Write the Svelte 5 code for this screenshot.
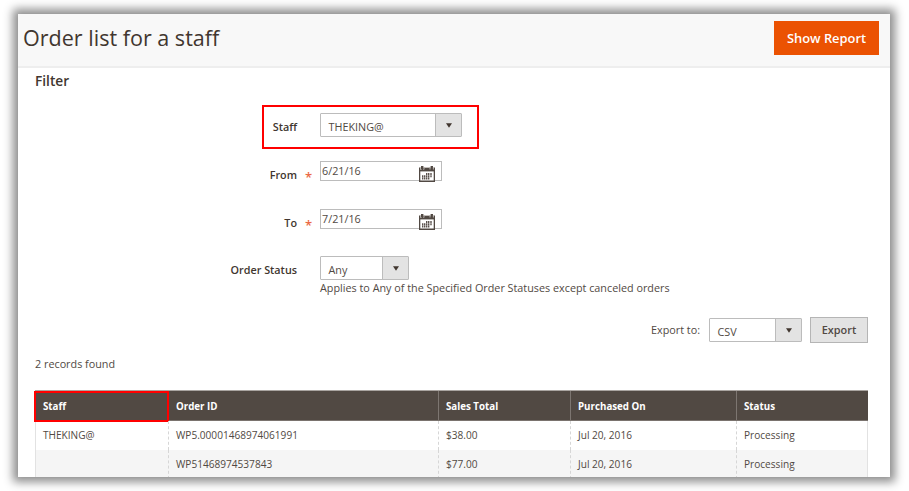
<script>
  const rows = [
    ['THEKING@', 'WP5.00001468974061991', '$38.00', 'Jul 20, 2016', 'Processing'],
    ['', 'WP51468974537843', '$77.00', 'Jul 20, 2016', 'Processing']
  ];
  const heads = ['Staff', 'Order ID', 'Sales Total', 'Purchased On', 'Status'];
</script>

{#snippet select(value, kind)}
  <div class="select {kind}">
    <span class="value">{value}</span>
    <span class="toggle"><svg width="6" height="5" viewBox="0 0 6 5"><path d="M0 .3h6L3 4.7z" fill="#41362f" /></svg></span>
  </div>
{/snippet}

{#snippet dateInput(value)}
  <div class="date">
    <span>{value}</span>
    <svg class="cal" width="16" height="16" viewBox="0 0 16 16">
      <path d="M0 1.5h16V16H0z" fill="#514943" />
      <path d="M1.3 5.4h13.4v9.1H1.3z" fill="#fff" />
      <path d="M2 0h2.4v3H2zM11.6 0H14v3h-2.4z" fill="#514943" />
      <path d="M1.5 1v2.5h1M5 1v2.5h-.5M11 1v2.5M14.4 1v2.5" fill="none" stroke="#d2cecb" stroke-width=".8" />
      <path d="M5.8 1h4.4v1H5.8z" fill="#c5c0bc" />
      <path d="M9 7h1.4v2H9zM11.3 7h1.4v2h-1.4zM7 7h1.4v2H7zM5 9.2h1.4v2H5zM7 9.2h1.4v2H7zM9 9.2h1.4v2H9zM11.3 9.2h1.4v2h-1.4zM3 9.2h1.4v2H3zM3 11.4h1.4v2H3zM5 11.4h1.4v2H5zM7 11.4h1.4v2H7zM9 11.4h1.4v2H9z" fill="#5a524d" />
    </svg>
  </div>
{/snippet}

<div class="page">
  <main class="window">
    <header>
      <h1>Order list for a staff</h1>
      <button class="primary">Show Report</button>
    </header>
    <section class="content">
      <h2>Filter</h2>
      <div class="form">
        <div class="field staff-field">
          <span class="label">Staff</span>
          {@render select('THEKING@', 'staff')}
        </div>
        <div class="field date-field">
          <span class="label">From</span><span class="star">*</span>
          {@render dateInput('6/21/16')}
        </div>
        <div class="field date-field">
          <span class="label">To</span><span class="star">*</span>
          {@render dateInput('7/21/16')}
        </div>
        <div class="field status-field">
          <span class="label">Order Status</span>
          <div>
            {@render select('Any', 'any')}
            <p class="note">Applies to Any of the Specified Order Statuses except canceled orders</p>
          </div>
        </div>
      </div>
      <div class="export">
        <span class="to">Export to:</span>
        {@render select('CSV', 'csv')}
        <button class="secondary">Export</button>
      </div>
      <p class="records">2 records found</p>
      <div class="grid">
        <div class="row head">
          {#each heads as head, i}
            <div class="cell" class:marked={i === 0}><span>{head}</span></div>
          {/each}
        </div>
        {#each rows as row}
          <div class="row">
            {#each row as cell}
              <div class="cell"><span>{cell}</span></div>
            {/each}
          </div>
        {/each}
      </div>
    </section>
  </main>
</div>

<style>
  :global(body) { background: #fff; }
  .page {
    box-sizing: border-box;
    width: 909px;
    height: 491px;
    padding: 14px 19px 14px 18px;
    overflow: hidden;
    font: 10.8px/16px 'Open Sans', 'Noto Sans', sans-serif;
    color: #514943;
  }
  .page * { box-sizing: border-box; }
  h1, h2, p { margin: 0; white-space: nowrap; }
  .window {
    height: 463px;
    background: #fff;
    box-shadow: 0 0 9px 5px rgba(0, 0, 0, .45);
  }
  header {
    display: flex;
    justify-content: space-between;
    align-items: flex-start;
    height: 54px;
    padding: 7px 11px 0 5px;
    background: #f8f8f8;
    border-bottom: 2px solid #eee;
  }
  h1 { font-size: 21.55px; font-weight: 400; line-height: 33px; color: #41362f; }
  button { font-family: inherit; border-radius: 0; padding: 0; white-space: nowrap; }
  .primary {
    width: 105px;
    height: 34px;
    border: 1px solid #eb5202;
    background: #eb5202;
    color: #fff;
    font-size: 12.9px;
    font-weight: 600;
  }
  .content { height: 409px; padding: 4px 22px 0 17px; overflow: hidden; }
  h2 { font-size: 13.7px; line-height: 18px; font-weight: 600; color: #41362f; }
  .form { padding-top: 15px; }
  .field { display: flex; align-items: flex-start; }
  .label {
    width: 262px;
    padding-top: 5px;
    text-align: right;
    font-weight: 600;
    color: #41362f;
  }
  .staff-field {
    width: 217px;
    height: 44px;
    margin-left: 227px;
    padding-top: 6px;
    border: 2px solid #f00;
  }
  .staff-field .label { width: 33px; padding-top: 6px; }
  .staff-field .select { margin-left: 23px; }
  .select {
    display: flex;
    height: 24px;
    border: 1px solid #bcbcbc;
    border-radius: 1px;
    background: #fff;
  }
  .select.staff { width: 142px; }
  .select.any { width: 89px; }
  .select.csv { width: 93px; }
  .value { flex: 1; padding: 4px 0 0 7.5px; line-height: 17px; }
  .toggle {
    display: flex;
    justify-content: center;
    width: 26px;
    padding-top: 9px;
    border-left: 1px solid #bcbcbc;
    background: #e3e3e3;
  }
  .date-field { height: 48px; padding-top: 12px; }
  .date-field .label { padding-top: 6px; }
  .star { width: 23px; padding: 8px 0 0 8px; font-size: 13px; line-height: 16px; font-weight: 600; color: #eb6a45; }
  .date {
    position: relative;
    width: 122px;
    height: 20px;
    padding: 1px 1px 0;
    border: 1px solid #bcbcbc;
    font-size: 10.8px;
  }
  .cal { position: absolute; left: 98px; top: 4px; }
  .status-field { height: 49px; padding-top: 11px; }
  .status-field .label { padding-top: 6px; }
  .status-field > div { margin-left: 23px; }
  .note { line-height: 16px; }
  .export { display: flex; justify-content: flex-end; align-items: center; height: 26px; margin-top: 23px; }
  .to { margin-right: 9px; }
  .secondary {
    width: 58px;
    height: 26px;
    margin-left: 8px;
    padding-bottom: 2px;
    border: 1px solid #b5b5b5;
    background: #e3e3e3;
    color: #514943;
    font-size: 10.9px;
    font-weight: 600;
  }
  .records { margin-top: 13px; }
  .grid { margin-top: 18px; border-right: 1px solid #e2e2e2; border-left: 1px solid #e2e2e2; }
  .row { display: grid; grid-template-columns: 133px 270px 132px 166px 1fr; height: 29px; font-size: 10.1px; }
  .row:last-child { background: #f5f5f5; }
  .cell { padding: 6px 0 0 7px; border-right: 1px dashed #d6d6d6; white-space: nowrap; }
  .cell:last-child { border-right: 0; }
  .head {
    height: 31px;
    margin: 0 -1px;
    padding: 0 1px;
    background: #514943;
    border-top: 1px solid #aaa5a1;
    border-bottom: 1px solid #7a736e;
    color: #fff;
    font-size: 9.75px;
    font-weight: 700;
  }
  .head .cell { padding-top: 8px; border-right: 1px solid #7d7671; }
  .head .cell:last-child { border-right: 0; }
  .head .marked { margin: 0 0 -2px -2px; padding: 6px 0 0 7px; border: 2px solid #f00; }
</style>
